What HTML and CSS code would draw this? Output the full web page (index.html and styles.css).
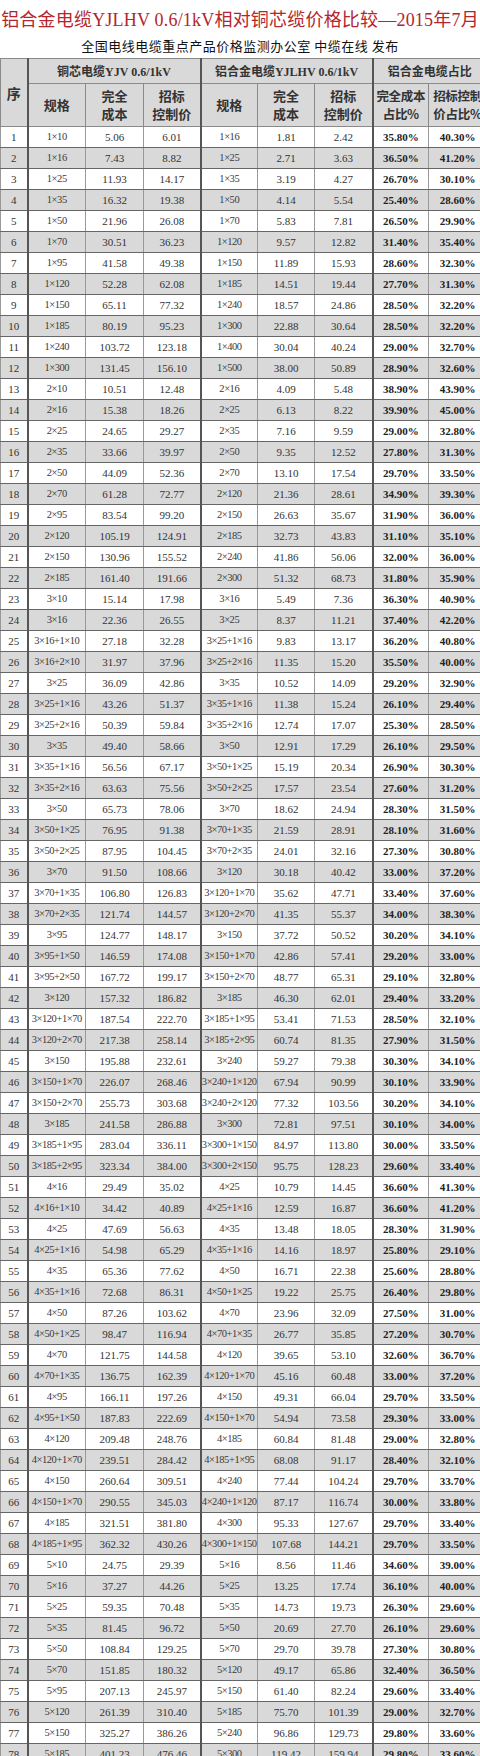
FILE: index.html
```html
<!DOCTYPE html>
<html lang="zh">
<head>
<meta charset="utf-8">
<title>铝合金电缆价格比较</title>
<link rel="stylesheet" href="styles.css">
</head>
<body>
<div class="page">
  <h1 class="title">铝合金电缆YJLHV 0.6/1kV相对铜芯缆价格比较—2015年7月</h1>
  <p class="subtitle">全国电线电缆重点产品价格监测办公室 中缆在线 发布</p>
  <table class="grid">
    <colgroup>
      <col class="c-seq"><col class="c-a"><col class="c-b"><col class="c-c"><col class="c-d"><col class="c-e"><col class="c-f"><col class="c-g"><col class="c-h">
    </colgroup>
    <thead>
      <tr class="h1">
        <th rowspan="2" class="seq gr">序</th>
        <th colspan="3" class="grp gr">铜芯电缆YJV 0.6/1kV</th>
        <th colspan="3" class="grp gr">铝合金电缆YJLHV 0.6/1kV</th>
        <th colspan="2" class="grp">铝合金电缆占比</th>
      </tr>
      <tr class="h2">
        <th>规格</th><th>完全<br>成本</th><th class="gr">招标<br>控制价</th>
        <th>规格</th><th>完全<br>成本</th><th class="gr">招标<br>控制价</th>
        <th class="sm">完全成本<br>占比%</th><th class="sm">招标控制<br>价占比%</th>
      </tr>
    </thead>
    <tbody>
<tr><td>1</td><td>1×10</td><td>5.06</td><td>6.01</td><td>1×16</td><td>1.81</td><td>2.42</td><td>35.80%</td><td>40.30%</td></tr>
<tr><td>2</td><td>1×16</td><td>7.43</td><td>8.82</td><td>1×25</td><td>2.71</td><td>3.63</td><td>36.50%</td><td>41.20%</td></tr>
<tr><td>3</td><td>1×25</td><td>11.93</td><td>14.17</td><td>1×35</td><td>3.19</td><td>4.27</td><td>26.70%</td><td>30.10%</td></tr>
<tr><td>4</td><td>1×35</td><td>16.32</td><td>19.38</td><td>1×50</td><td>4.14</td><td>5.54</td><td>25.40%</td><td>28.60%</td></tr>
<tr><td>5</td><td>1×50</td><td>21.96</td><td>26.08</td><td>1×70</td><td>5.83</td><td>7.81</td><td>26.50%</td><td>29.90%</td></tr>
<tr><td>6</td><td>1×70</td><td>30.51</td><td>36.23</td><td>1×120</td><td>9.57</td><td>12.82</td><td>31.40%</td><td>35.40%</td></tr>
<tr><td>7</td><td>1×95</td><td>41.58</td><td>49.38</td><td>1×150</td><td>11.89</td><td>15.93</td><td>28.60%</td><td>32.30%</td></tr>
<tr><td>8</td><td>1×120</td><td>52.28</td><td>62.08</td><td>1×185</td><td>14.51</td><td>19.44</td><td>27.70%</td><td>31.30%</td></tr>
<tr><td>9</td><td>1×150</td><td>65.11</td><td>77.32</td><td>1×240</td><td>18.57</td><td>24.86</td><td>28.50%</td><td>32.20%</td></tr>
<tr><td>10</td><td>1×185</td><td>80.19</td><td>95.23</td><td>1×300</td><td>22.88</td><td>30.64</td><td>28.50%</td><td>32.20%</td></tr>
<tr><td>11</td><td>1×240</td><td>103.72</td><td>123.18</td><td>1×400</td><td>30.04</td><td>40.24</td><td>29.00%</td><td>32.70%</td></tr>
<tr><td>12</td><td>1×300</td><td>131.45</td><td>156.10</td><td>1×500</td><td>38.00</td><td>50.89</td><td>28.90%</td><td>32.60%</td></tr>
<tr><td>13</td><td>2×10</td><td>10.51</td><td>12.48</td><td>2×16</td><td>4.09</td><td>5.48</td><td>38.90%</td><td>43.90%</td></tr>
<tr><td>14</td><td>2×16</td><td>15.38</td><td>18.26</td><td>2×25</td><td>6.13</td><td>8.22</td><td>39.90%</td><td>45.00%</td></tr>
<tr><td>15</td><td>2×25</td><td>24.65</td><td>29.27</td><td>2×35</td><td>7.16</td><td>9.59</td><td>29.00%</td><td>32.80%</td></tr>
<tr><td>16</td><td>2×35</td><td>33.66</td><td>39.97</td><td>2×50</td><td>9.35</td><td>12.52</td><td>27.80%</td><td>31.30%</td></tr>
<tr><td>17</td><td>2×50</td><td>44.09</td><td>52.36</td><td>2×70</td><td>13.10</td><td>17.54</td><td>29.70%</td><td>33.50%</td></tr>
<tr><td>18</td><td>2×70</td><td>61.28</td><td>72.77</td><td>2×120</td><td>21.36</td><td>28.61</td><td>34.90%</td><td>39.30%</td></tr>
<tr><td>19</td><td>2×95</td><td>83.54</td><td>99.20</td><td>2×150</td><td>26.63</td><td>35.67</td><td>31.90%</td><td>36.00%</td></tr>
<tr><td>20</td><td>2×120</td><td>105.19</td><td>124.91</td><td>2×185</td><td>32.73</td><td>43.83</td><td>31.10%</td><td>35.10%</td></tr>
<tr><td>21</td><td>2×150</td><td>130.96</td><td>155.52</td><td>2×240</td><td>41.86</td><td>56.06</td><td>32.00%</td><td>36.00%</td></tr>
<tr><td>22</td><td>2×185</td><td>161.40</td><td>191.66</td><td>2×300</td><td>51.32</td><td>68.73</td><td>31.80%</td><td>35.90%</td></tr>
<tr><td>23</td><td>3×10</td><td>15.14</td><td>17.98</td><td>3×16</td><td>5.49</td><td>7.36</td><td>36.30%</td><td>40.90%</td></tr>
<tr><td>24</td><td>3×16</td><td>22.36</td><td>26.55</td><td>3×25</td><td>8.37</td><td>11.21</td><td>37.40%</td><td>42.20%</td></tr>
<tr><td>25</td><td>3×16+1×10</td><td>27.18</td><td>32.28</td><td>3×25+1×16</td><td>9.83</td><td>13.17</td><td>36.20%</td><td>40.80%</td></tr>
<tr><td>26</td><td>3×16+2×10</td><td>31.97</td><td>37.96</td><td>3×25+2×16</td><td>11.35</td><td>15.20</td><td>35.50%</td><td>40.00%</td></tr>
<tr><td>27</td><td>3×25</td><td>36.09</td><td>42.86</td><td>3×35</td><td>10.52</td><td>14.09</td><td>29.20%</td><td>32.90%</td></tr>
<tr><td>28</td><td>3×25+1×16</td><td>43.26</td><td>51.37</td><td>3×35+1×16</td><td>11.38</td><td>15.24</td><td>26.10%</td><td>29.40%</td></tr>
<tr><td>29</td><td>3×25+2×16</td><td>50.39</td><td>59.84</td><td>3×35+2×16</td><td>12.74</td><td>17.07</td><td>25.30%</td><td>28.50%</td></tr>
<tr><td>30</td><td>3×35</td><td>49.40</td><td>58.66</td><td>3×50</td><td>12.91</td><td>17.29</td><td>26.10%</td><td>29.50%</td></tr>
<tr><td>31</td><td>3×35+1×16</td><td>56.56</td><td>67.17</td><td>3×50+1×25</td><td>15.19</td><td>20.34</td><td>26.90%</td><td>30.30%</td></tr>
<tr><td>32</td><td>3×35+2×16</td><td>63.63</td><td>75.56</td><td>3×50+2×25</td><td>17.57</td><td>23.54</td><td>27.60%</td><td>31.20%</td></tr>
<tr><td>33</td><td>3×50</td><td>65.73</td><td>78.06</td><td>3×70</td><td>18.62</td><td>24.94</td><td>28.30%</td><td>31.50%</td></tr>
<tr><td>34</td><td>3×50+1×25</td><td>76.95</td><td>91.38</td><td>3×70+1×35</td><td>21.59</td><td>28.91</td><td>28.10%</td><td>31.60%</td></tr>
<tr><td>35</td><td>3×50+2×25</td><td>87.95</td><td>104.45</td><td>3×70+2×35</td><td>24.01</td><td>32.16</td><td>27.30%</td><td>30.80%</td></tr>
<tr><td>36</td><td>3×70</td><td>91.50</td><td>108.66</td><td>3×120</td><td>30.18</td><td>40.42</td><td>33.00%</td><td>37.20%</td></tr>
<tr><td>37</td><td>3×70+1×35</td><td>106.80</td><td>126.83</td><td>3×120+1×70</td><td>35.62</td><td>47.71</td><td>33.40%</td><td>37.60%</td></tr>
<tr><td>38</td><td>3×70+2×35</td><td>121.74</td><td>144.57</td><td>3×120+2×70</td><td>41.35</td><td>55.37</td><td>34.00%</td><td>38.30%</td></tr>
<tr><td>39</td><td>3×95</td><td>124.77</td><td>148.17</td><td>3×150</td><td>37.72</td><td>50.52</td><td>30.20%</td><td>34.10%</td></tr>
<tr><td>40</td><td>3×95+1×50</td><td>146.59</td><td>174.08</td><td>3×150+1×70</td><td>42.86</td><td>57.41</td><td>29.20%</td><td>33.00%</td></tr>
<tr><td>41</td><td>3×95+2×50</td><td>167.72</td><td>199.17</td><td>3×150+2×70</td><td>48.77</td><td>65.31</td><td>29.10%</td><td>32.80%</td></tr>
<tr><td>42</td><td>3×120</td><td>157.32</td><td>186.82</td><td>3×185</td><td>46.30</td><td>62.01</td><td>29.40%</td><td>33.20%</td></tr>
<tr><td>43</td><td>3×120+1×70</td><td>187.54</td><td>222.70</td><td>3×185+1×95</td><td>53.41</td><td>71.53</td><td>28.50%</td><td>32.10%</td></tr>
<tr><td>44</td><td>3×120+2×70</td><td>217.38</td><td>258.14</td><td>3×185+2×95</td><td>60.74</td><td>81.35</td><td>27.90%</td><td>31.50%</td></tr>
<tr><td>45</td><td>3×150</td><td>195.88</td><td>232.61</td><td>3×240</td><td>59.27</td><td>79.38</td><td>30.30%</td><td>34.10%</td></tr>
<tr><td>46</td><td>3×150+1×70</td><td>226.07</td><td>268.46</td><td>3×240+1×120</td><td>67.94</td><td>90.99</td><td>30.10%</td><td>33.90%</td></tr>
<tr><td>47</td><td>3×150+2×70</td><td>255.73</td><td>303.68</td><td>3×240+2×120</td><td>77.32</td><td>103.56</td><td>30.20%</td><td>34.10%</td></tr>
<tr><td>48</td><td>3×185</td><td>241.58</td><td>286.88</td><td>3×300</td><td>72.81</td><td>97.51</td><td>30.10%</td><td>34.00%</td></tr>
<tr><td>49</td><td>3×185+1×95</td><td>283.04</td><td>336.11</td><td>3×300+1×150</td><td>84.97</td><td>113.80</td><td>30.00%</td><td>33.50%</td></tr>
<tr><td>50</td><td>3×185+2×95</td><td>323.34</td><td>384.00</td><td>3×300+2×150</td><td>95.75</td><td>128.23</td><td>29.60%</td><td>33.40%</td></tr>
<tr><td>51</td><td>4×16</td><td>29.49</td><td>35.02</td><td>4×25</td><td>10.79</td><td>14.45</td><td>36.60%</td><td>41.30%</td></tr>
<tr><td>52</td><td>4×16+1×10</td><td>34.42</td><td>40.89</td><td>4×25+1×16</td><td>12.59</td><td>16.87</td><td>36.60%</td><td>41.20%</td></tr>
<tr><td>53</td><td>4×25</td><td>47.69</td><td>56.63</td><td>4×35</td><td>13.48</td><td>18.05</td><td>28.30%</td><td>31.90%</td></tr>
<tr><td>54</td><td>4×25+1×16</td><td>54.98</td><td>65.29</td><td>4×35+1×16</td><td>14.16</td><td>18.97</td><td>25.80%</td><td>29.10%</td></tr>
<tr><td>55</td><td>4×35</td><td>65.36</td><td>77.62</td><td>4×50</td><td>16.71</td><td>22.38</td><td>25.60%</td><td>28.80%</td></tr>
<tr><td>56</td><td>4×35+1×16</td><td>72.68</td><td>86.31</td><td>4×50+1×25</td><td>19.22</td><td>25.75</td><td>26.40%</td><td>29.80%</td></tr>
<tr><td>57</td><td>4×50</td><td>87.26</td><td>103.62</td><td>4×70</td><td>23.96</td><td>32.09</td><td>27.50%</td><td>31.00%</td></tr>
<tr><td>58</td><td>4×50+1×25</td><td>98.47</td><td>116.94</td><td>4×70+1×35</td><td>26.77</td><td>35.85</td><td>27.20%</td><td>30.70%</td></tr>
<tr><td>59</td><td>4×70</td><td>121.75</td><td>144.58</td><td>4×120</td><td>39.65</td><td>53.10</td><td>32.60%</td><td>36.70%</td></tr>
<tr><td>60</td><td>4×70+1×35</td><td>136.75</td><td>162.39</td><td>4×120+1×70</td><td>45.16</td><td>60.48</td><td>33.00%</td><td>37.20%</td></tr>
<tr><td>61</td><td>4×95</td><td>166.11</td><td>197.26</td><td>4×150</td><td>49.31</td><td>66.04</td><td>29.70%</td><td>33.50%</td></tr>
<tr><td>62</td><td>4×95+1×50</td><td>187.83</td><td>222.69</td><td>4×150+1×70</td><td>54.94</td><td>73.58</td><td>29.30%</td><td>33.00%</td></tr>
<tr><td>63</td><td>4×120</td><td>209.48</td><td>248.76</td><td>4×185</td><td>60.84</td><td>81.48</td><td>29.00%</td><td>32.80%</td></tr>
<tr><td>64</td><td>4×120+1×70</td><td>239.51</td><td>284.42</td><td>4×185+1×95</td><td>68.08</td><td>91.17</td><td>28.40%</td><td>32.10%</td></tr>
<tr><td>65</td><td>4×150</td><td>260.64</td><td>309.51</td><td>4×240</td><td>77.44</td><td>104.24</td><td>29.70%</td><td>33.70%</td></tr>
<tr><td>66</td><td>4×150+1×70</td><td>290.55</td><td>345.03</td><td>4×240+1×120</td><td>87.17</td><td>116.74</td><td>30.00%</td><td>33.80%</td></tr>
<tr><td>67</td><td>4×185</td><td>321.51</td><td>381.80</td><td>4×300</td><td>95.33</td><td>127.67</td><td>29.70%</td><td>33.40%</td></tr>
<tr><td>68</td><td>4×185+1×95</td><td>362.32</td><td>430.26</td><td>4×300+1×150</td><td>107.68</td><td>144.21</td><td>29.70%</td><td>33.50%</td></tr>
<tr><td>69</td><td>5×10</td><td>24.75</td><td>29.39</td><td>5×16</td><td>8.56</td><td>11.46</td><td>34.60%</td><td>39.00%</td></tr>
<tr><td>70</td><td>5×16</td><td>37.27</td><td>44.26</td><td>5×25</td><td>13.25</td><td>17.74</td><td>36.10%</td><td>40.00%</td></tr>
<tr><td>71</td><td>5×25</td><td>59.35</td><td>70.48</td><td>5×35</td><td>14.73</td><td>19.73</td><td>26.30%</td><td>29.60%</td></tr>
<tr><td>72</td><td>5×35</td><td>81.45</td><td>96.72</td><td>5×50</td><td>20.69</td><td>27.70</td><td>26.10%</td><td>29.60%</td></tr>
<tr><td>73</td><td>5×50</td><td>108.84</td><td>129.25</td><td>5×70</td><td>29.70</td><td>39.78</td><td>27.30%</td><td>30.80%</td></tr>
<tr><td>74</td><td>5×70</td><td>151.85</td><td>180.32</td><td>5×120</td><td>49.17</td><td>65.86</td><td>32.40%</td><td>36.50%</td></tr>
<tr><td>75</td><td>5×95</td><td>207.13</td><td>245.97</td><td>5×150</td><td>61.40</td><td>82.24</td><td>29.60%</td><td>33.40%</td></tr>
<tr><td>76</td><td>5×120</td><td>261.39</td><td>310.40</td><td>5×185</td><td>75.70</td><td>101.39</td><td>29.00%</td><td>32.70%</td></tr>
<tr><td>77</td><td>5×150</td><td>325.27</td><td>386.26</td><td>5×240</td><td>96.86</td><td>129.73</td><td>29.80%</td><td>33.60%</td></tr>
<tr><td>78</td><td>5×185</td><td>401.23</td><td>476.46</td><td>5×300</td><td>119.42</td><td>159.94</td><td>29.80%</td><td>33.60%</td></tr>
    </tbody>
  </table>
</div>
</body>
</html>
```

FILE: styles.css
```css
html, body {
  margin: 0;
  padding: 0;
  background: #ffffff;
}
body {
  width: 480px;
  overflow: hidden;
  font-family: "Liberation Serif", "Noto Sans CJK SC", serif;
  color: #222;
}
.page {
  width: 480px;
}
.title {
  margin: 0;
  height: 38px;
  line-height: 40px;
  text-align: center;
  font-size: 18px;
  font-weight: normal;
  color: #b3262b;
  white-space: nowrap;
  letter-spacing: 0.2px;
  font-family: "Liberation Serif", "Noto Sans CJK SC", serif;
}
.subtitle {
  margin: 0;
  height: 20px;
  line-height: 16px;
  text-align: center;
  font-size: 13px;
  color: #111;
  font-family: "Noto Sans CJK SC", sans-serif;
  letter-spacing: 0.5px;
}
.grid {
  border-collapse: collapse;
  table-layout: fixed;
  width: 486px;
}
.c-seq { width: 27px; }
.c-a { width: 58px; }
.c-b { width: 58px; }
.c-c { width: 57px; }
.c-d { width: 57px; }
.c-e { width: 57px; }
.c-f { width: 58px; }
.c-g { width: 56px; }
.c-h { width: 58px; }

.grid th, .grid td {
  border: 1px solid #8a8a8a;
  padding: 0;
  text-align: center;
  white-space: nowrap;
  overflow: hidden;
}
.grid th {
  background: #d9d9d9;
  font-family: "Noto Sans CJK SC", sans-serif;
  font-weight: bold;
  color: #333;
}
.h1 th {
  height: 24px;
  font-size: 12px;
}
.h1 .grp {
  font-family: "Liberation Serif", "Noto Sans CJK SC", serif;
  font-weight: bold;
  font-size: 12px;
}
.h1 .seq {
  font-size: 14px;
  font-weight: bold;
}
.h2 th {
  height: 42px;
  font-size: 13px;
  line-height: 18px;
}
.h2 th.sm {
  font-size: 12.5px;
  letter-spacing: -0.3px;
}
.grid .gr {
  border-right: 2px solid #555;
}
.grid td {
  height: 20px;
  font-size: 11px;
  line-height: 20px;
  color: #333;
  border-color: #666 #999;
}
.grid td:nth-child(2),
.grid td:nth-child(5) {
  font-size: 10.5px;
  letter-spacing: -0.45px;
  color: #3a3a3a;
}
.grid td:first-child,
.grid td:nth-child(4),
.grid td:nth-child(7) {
  border-right: 2px solid #555;
}
.grid td:nth-child(8),
.grid td:nth-child(9) {
  font-weight: bold;
  color: #222;
}
.grid tbody tr:nth-child(even) td {
  background: #d9d9d9;
}
```
